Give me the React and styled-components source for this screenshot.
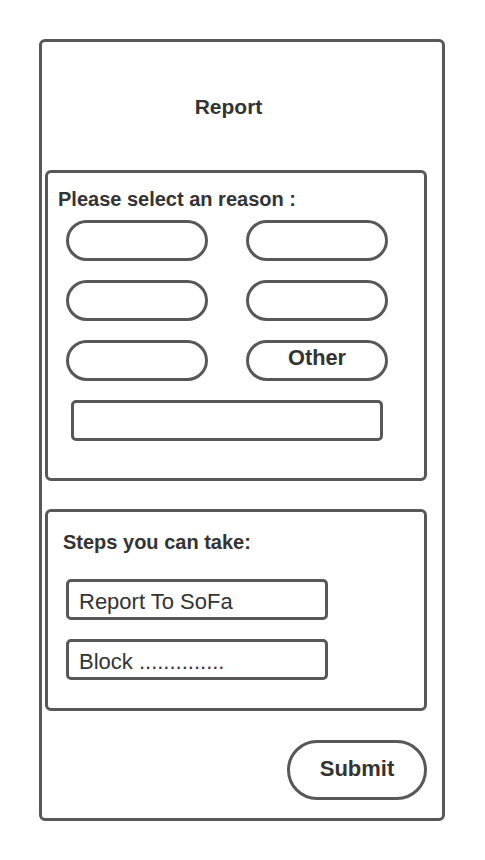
import React from "react";
import styled, { createGlobalStyle } from "styled-components";

const GlobalStyle = createGlobalStyle`
  html, body {
    margin: 0;
    padding: 0;
    background: #ffffff;
    font-family: "Liberation Sans", Arial, sans-serif;
    color: #333333;
  }
  * { box-sizing: border-box; }
`;

const Frame = styled.div`
  margin: 39px 0 0 39px;
  width: 406px;
  height: 782px;
  border: 3px solid #585858;
  border-radius: 6px;
  padding: 0 15px 0 3px;
  display: flex;
  flex-direction: column;
`;

const Title = styled.h1`
  margin: 0;
  height: 128px;
  padding: 2px 15px 0 0;
  display: flex;
  align-items: center;
  justify-content: center;
  font-size: 21px;
  font-weight: 700;
  color: #333333;
`;

const Panel = styled.section`
  height: ${(p) => p.$height}px;
  margin-top: ${(p) => p.$gap || 0}px;
  border: 3px solid #585858;
  border-radius: 6px;
  padding: ${(p) => p.$padTop}px 0 0 ${(p) => p.$padLeft}px;
  display: flex;
  flex-direction: column;
`;

const Label = styled.div`
  font-size: 20px;
  font-weight: 700;
  line-height: 24px;
  height: 24px;
  color: #333333;
`;

const OptionGrid = styled.div`
  margin: 8.7px 0 0 8px;
  display: grid;
  grid-template-columns: 142px 142px;
  grid-auto-rows: 41px;
  column-gap: 38px;
  row-gap: 19px;
`;

const Pill = styled.button`
  border: 3px solid #585858;
  border-radius: 999px;
  background: #ffffff;
  padding: 0 0 5px 0;
  font-family: "Liberation Sans", Arial, sans-serif;
  font-size: 21.8px;
  font-weight: 700;
  color: #333333;
  display: flex;
  align-items: center;
  justify-content: center;
`;

const TextBox = styled.div`
  margin: 19px 0 0 13px;
  width: 312px;
  height: 41px;
  border: 3px solid #585858;
  border-radius: 5px;
`;

const StepList = styled.div`
  margin: 25px 0 0 3px;
  display: flex;
  flex-direction: column;
  gap: 19px;
`;

const StepBox = styled.div`
  width: 262px;
  height: 41px;
  border: 3px solid #585858;
  border-radius: 5px;
  padding: 4px 0 0 10px;
  display: flex;
  align-items: center;
  font-size: 22px;
  color: #333333;
`;

const SubmitButton = styled.button`
  align-self: flex-end;
  margin-top: 29px;
  width: 140px;
  height: 60px;
  border: 3px solid #585858;
  border-radius: 999px;
  background: #ffffff;
  padding: 0 0 3px 0;
  font-family: "Liberation Sans", Arial, sans-serif;
  font-size: 22px;
  font-weight: 700;
  color: #333333;
  display: flex;
  align-items: center;
  justify-content: center;
`;

const options = ["", "", "", "", "", "Other"];

export default function App() {
  return (
    <>
      <GlobalStyle />
      <Frame>
        <Title>Report</Title>
        <Panel $height={311} $gap={0} $padTop={14} $padLeft={10}>
          <Label>Please select an reason :</Label>
          <OptionGrid>
            {options.map((o, i) => (
              <Pill key={i}>{o}</Pill>
            ))}
          </OptionGrid>
          <TextBox />
        </Panel>
        <Panel $height={202} $gap={28} $padTop={18} $padLeft={15}>
          <Label>Steps you can take:</Label>
          <StepList>
            <StepBox>Report To SoFa</StepBox>
            <StepBox>Block ..............</StepBox>
          </StepList>
        </Panel>
        <SubmitButton>Submit</SubmitButton>
      </Frame>
    </>
  );
}
